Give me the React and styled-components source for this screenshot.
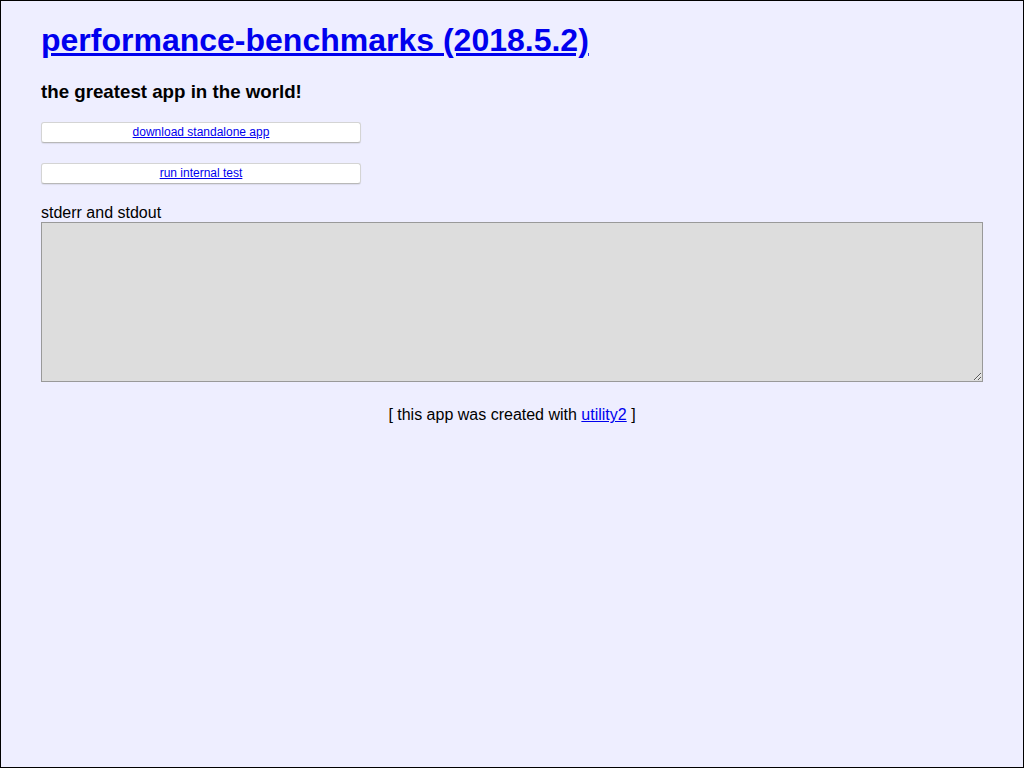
import React from "react";
import styled, { createGlobalStyle } from "styled-components";

const Global = createGlobalStyle`
  html, body { margin: 0; padding: 0; }
  body { background: #eeeeff; font-family: "Liberation Sans", Arial, sans-serif; }
  * { box-sizing: border-box; }
`;

const Frame = styled.div`
  width: 1024px;
  height: 768px;
  border: 1px solid #000;
  background: #eeeeff;
  padding: 0 40px;
  overflow: hidden;
`;

const Title = styled.h1`
  font-size: 32px;
  font-weight: bold;
  margin: 21.44px 0;
  a { color: #0000ee; text-decoration: underline; }
`;

const Subtitle = styled.h3`
  font-size: 18.72px;
  font-weight: bold;
  margin: 0 0 19px;
  color: #000;
`;

const Button = styled.button`
  display: block;
  width: 320px;
  height: 21px;
  margin: 0 0 20px;
  padding: 0;
  background: #fff;
  border: 1px solid #d4d4d4;
  border-bottom-color: #b8b8b8;
  border-radius: 3px;
  box-shadow: 0 1px 1px rgba(0, 0, 0, 0.08);
  font-family: "Liberation Sans", Arial, sans-serif;
  font-size: 12px;
  color: #0000ee;
  text-decoration: underline;
  cursor: pointer;
`;

const Label = styled.label`
  display: block;
  font-size: 16px;
  line-height: 18.4px;
  color: #000;
`;

const Output = styled.textarea`
  display: block;
  width: 942px;
  height: 160px;
  margin: 0;
  background: #dddddd;
  border: 1px solid #999;
  font-family: "Liberation Mono", monospace;
  font-size: 12px;
`;

const Footer = styled.div`
  margin-top: 24px;
  text-align: center;
  font-size: 16px;
  color: #000;
  a { color: #0000ee; text-decoration: underline; }
`;

export default function App() {
  return (
    <>
      <Global />
      <Frame>
        <Title>
          <a href="#">performance-benchmarks (2018.5.2)</a>
        </Title>
        <Subtitle>the greatest app in the world!</Subtitle>
        <Button>download standalone app</Button>
        <Button>run internal test</Button>
        <Label>stderr and stdout</Label>
        <Output readOnly />
        <Footer>
          [ this app was created with <a href="#">utility2</a> ]
        </Footer>
      </Frame>
    </>
  );
}
